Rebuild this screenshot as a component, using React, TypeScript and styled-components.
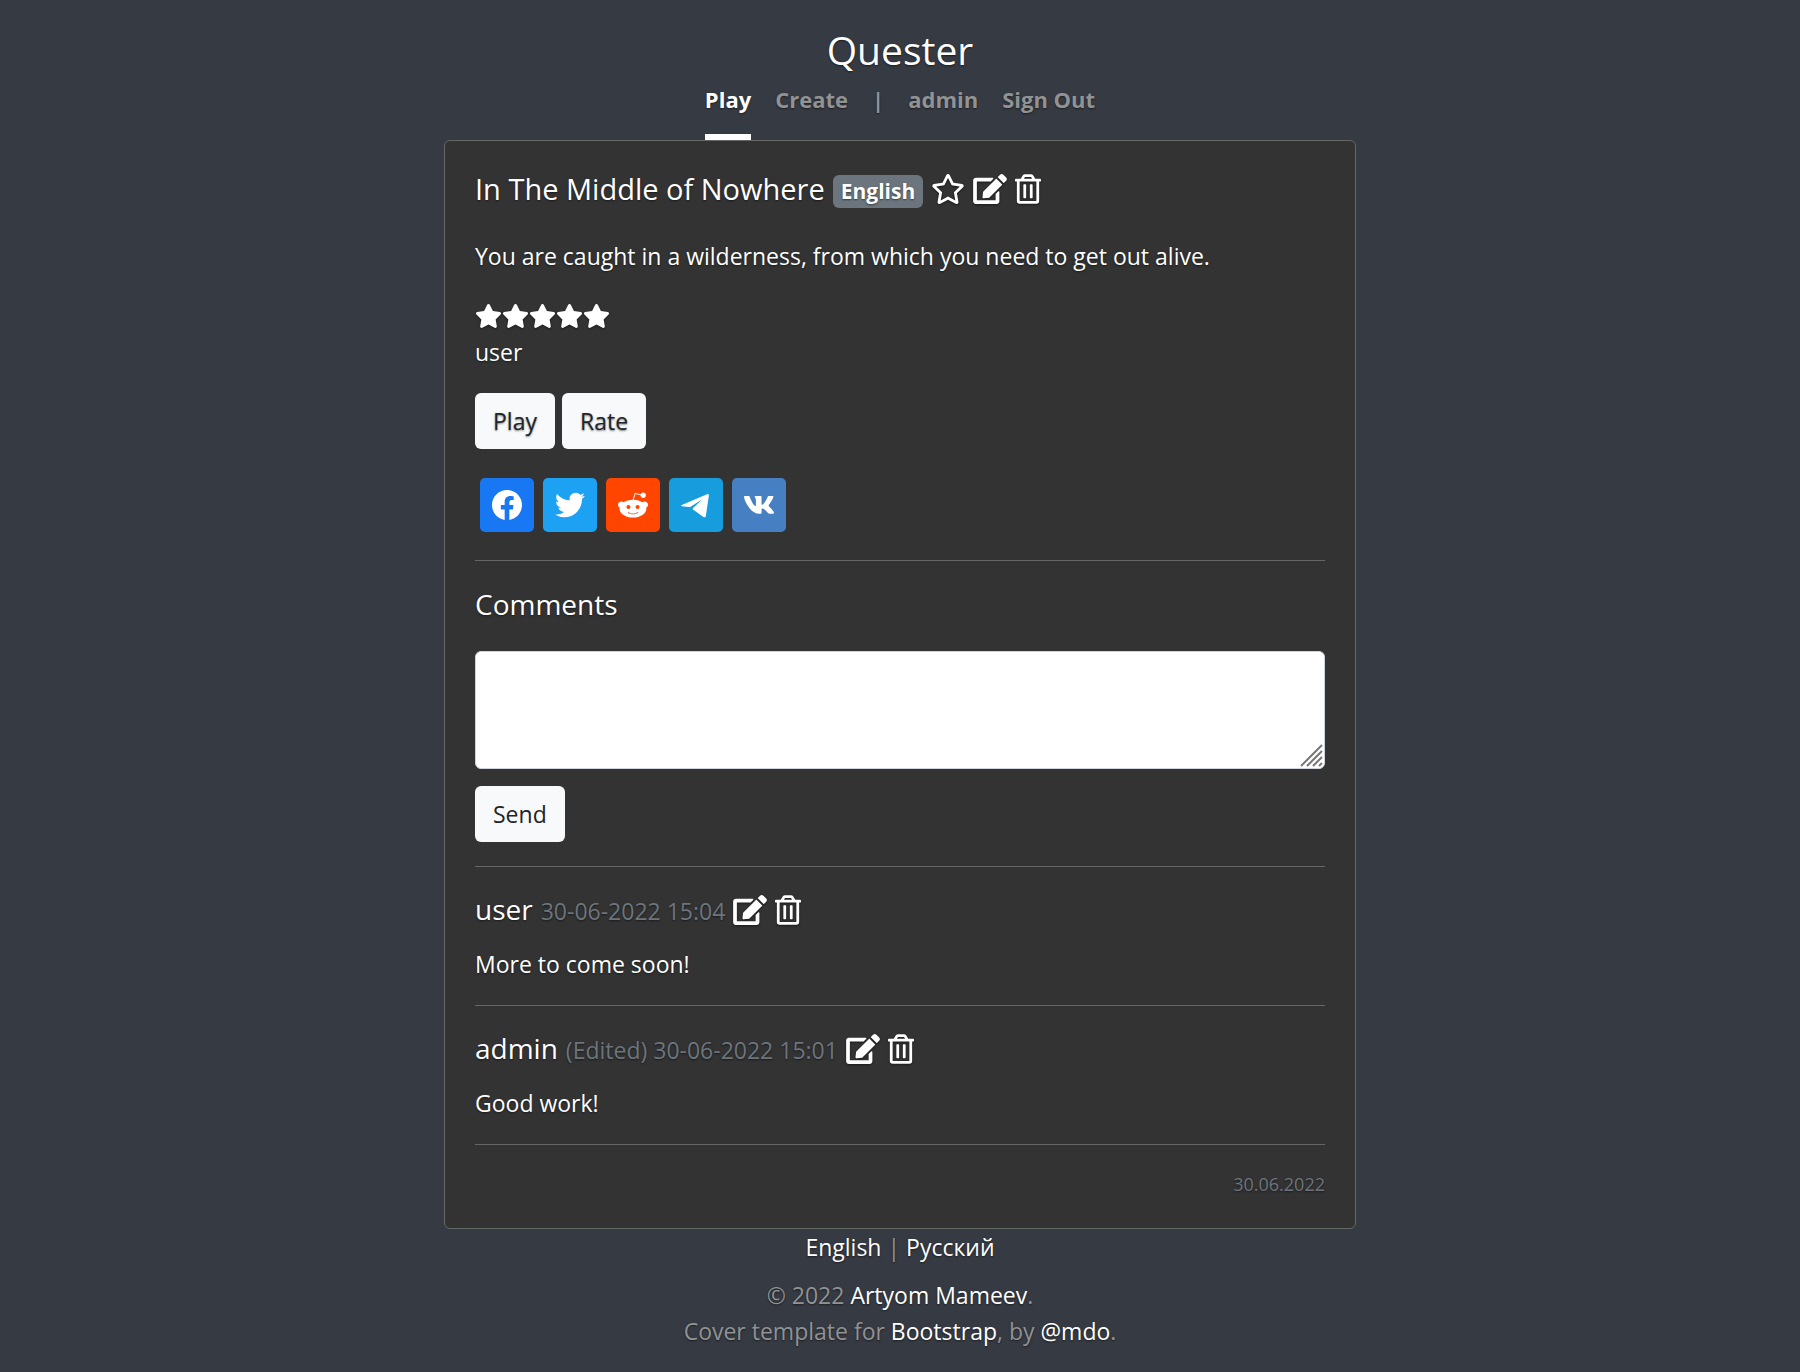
import React from "react";
import styled, { createGlobalStyle } from "styled-components";
import { FaStar, FaRegStar, FaEdit, FaRegTrashAlt } from "react-icons/fa";

const GlobalStyle = createGlobalStyle`
  * { box-sizing: border-box; }
  html { background: #363a42; }
  body {
    margin: 0;
    color: #fff;
    font-family: "Segoe UI", "Open Sans", "Noto Sans", sans-serif;
    font-size: 23px;
    line-height: 36px;
    text-shadow: 0 1px 2px rgba(0, 0, 0, 0.5);
  }
  h1, h2, h3, p { margin: 0; font-weight: 400; }
  button, textarea { font: inherit; }
`;

const Page = styled.div`
  max-width: 960px;
  margin: 0 auto;
  padding: 24px;
`;

const Header = styled.header`
  display: flex;
  flex-direction: column;
  align-items: center;
`;

const Brand = styled.h1`
  font-size: 39px;
  line-height: 52px;
`;

const Nav = styled.nav`
  display: flex;
  gap: 24px;
  font-size: 22px;
  font-weight: 700;
`;

const NavLink = styled.a<{ $active?: boolean }>`
  padding: 5px 0 17px;
  border-bottom: 6px solid ${(p) => (p.$active ? "#fff" : "transparent")};
  color: ${(p) => (p.$active ? "#fff" : "#919293")};
  text-decoration: none;
`;

const NavDivider = styled.span`
  padding: 5px 0 0;
  color: #919293;
`;

const Card = styled.main`
  border: 1px solid #666864;
  border-radius: 6px;
  background: #333;
  padding: 30px;
`;

const TitleRow = styled.div`
  display: flex;
  align-items: center;
  gap: 8px;
  height: 36px;
`;

const Byline = styled.div`
  display: flex;
  align-items: baseline;
  gap: 8px;
`;

const Title = styled.h2<{ $large?: boolean }>`
  display: block;
  font-size: ${(p) => (p.$large ? 29 : 28)}px;
  line-height: 36px;
`;

const Badge = styled.span`
  padding: 0 8px;
  margin-top: 4px;
  border-radius: 6px;
  background: #6c757d;
  font-size: 21px;
  font-weight: 700;
  line-height: 33px;
`;

const IconButton = styled.button<{ $width: number }>`
  display: flex;
  padding: 0;
  border: 0;
  background: none;
  color: #fff;
  cursor: pointer;

  svg {
    width: ${(p) => p.$width}px;
    height: 30px;
    filter: drop-shadow(0 1px 1px rgba(0, 0, 0, 0.5));
  }
`;

const Description = styled.p`
  margin: 31px 0 24px;
`;

const Stars = styled.div`
  display: flex;
  height: 36px;
  padding-top: 6px;

  svg {
    width: 27px;
    height: 24px;
    filter: drop-shadow(0 1px 1px rgba(0, 0, 0, 0.5));
  }
`;

const ButtonRow = styled.div`
  display: flex;
  gap: 7px;
  margin: 23px 0 29px;
`;

const Button = styled.button<{ $flat?: boolean }>`
  height: 56px;
  padding: 0 18px;
  border: 0;
  border-radius: 6px;
  background: #f8f9fa;
  color: #212529;
  text-shadow: ${(p) => (p.$flat ? "none" : "0 1px 2px rgba(0, 0, 0, 0.5)")};
  cursor: pointer;
`;

const ShareRow = styled.div`
  display: flex;
  gap: 9px;
  padding: 0 5px;
`;

const ShareLink = styled.a<{ $color: string }>`
  display: flex;
  align-items: center;
  justify-content: center;
  width: 54px;
  height: 54px;
  border-radius: 5px;
  background: ${(p) => p.$color};
  color: #fff;
`;

const Rule = styled.hr<{ $gap: number }>`
  height: 1px;
  margin: ${(p) => p.$gap}px 0 25px;
  border: 0;
  background: #666;
`;

const CommentField = styled.div`
  position: relative;
  margin: 29px 0 17px;
`;

const CommentBox = styled.textarea`
  display: block;
  width: 100%;
  height: 118px;
  padding: 9px 18px;
  border: 1px solid #ced4da;
  border-radius: 6px;
  background: #fff;
  resize: vertical;

  &::-webkit-resizer { background: transparent; }
`;

const Grip = styled.svg`
  position: absolute;
  right: 2px;
  bottom: 2px;
  pointer-events: none;
`;

const Stamp = styled.span`
  color: #6c757d;
`;

const CommentText = styled.p`
  margin-top: 18px;
`;

const CardDate = styled.p`
  color: #6c757d;
  font-size: 18px;
  line-height: 28px;
  text-align: right;
`;

const Footer = styled.footer`
  color: #919293;
  text-align: center;

  a { color: #fff; text-decoration: none; }
`;

const Languages = styled.p`
  && { margin-bottom: 12px; }
`;

const shares = [
  {
    name: "Facebook",
    color: "#1877f2",
    box: "0 0 24 24",
    d: "M24 12.073c0-6.627-5.373-12-12-12s-12 5.373-12 12c0 5.99 4.388 10.954 10.125 11.854v-8.385H7.078v-3.47h3.047V9.43c0-3.007 1.792-4.669 4.533-4.669 1.312 0 2.686.235 2.686.235v2.953H15.83c-1.491 0-1.956.925-1.956 1.874v2.25h3.328l-.532 3.47h-2.796v8.385C19.612 23.027 24 18.062 24 12.073z",
  },
  {
    name: "Twitter",
    color: "#1da1f2",
    box: "0 0 24 24",
    d: "M23.953 4.57a10 10 0 01-2.825.775 4.958 4.958 0 002.163-2.723c-.951.555-2.005.959-3.127 1.184a4.92 4.92 0 00-8.384 4.482C7.69 8.095 4.067 6.13 1.64 3.162a4.822 4.822 0 00-.666 2.475c0 1.71.87 3.213 2.188 4.096a4.904 4.904 0 01-2.228-.616v.06a4.923 4.923 0 003.946 4.827 4.996 4.996 0 01-2.212.085 4.936 4.936 0 004.604 3.417 9.867 9.867 0 01-6.102 2.105c-.39 0-.779-.023-1.17-.067a13.995 13.995 0 007.557 2.209c9.053 0 13.998-7.496 13.998-13.985 0-.21 0-.42-.015-.63A9.935 9.935 0 0024 4.59z",
  },
  {
    name: "Reddit",
    color: "#ff4500",
    box: "0 0 24 24",
    d: "M24 11.779c0-1.459-1.192-2.645-2.657-2.645-.715 0-1.363.286-1.84.746-1.81-1.191-4.259-1.949-6.971-2.046l1.483-4.669 4.016.941-.006.058c0 1.193.975 2.163 2.174 2.163 1.198 0 2.172-.97 2.172-2.163s-.975-2.164-2.172-2.164c-.92 0-1.704.574-2.021 1.379l-4.329-1.015c-.189-.046-.381.063-.44.249l-1.654 5.207c-2.838.034-5.409.798-7.3 2.025-.474-.438-1.103-.712-1.799-.712-1.465 0-2.656 1.187-2.656 2.646 0 .97.533 1.811 1.317 2.271-.052.282-.086.567-.086.857 0 3.911 4.808 7.093 10.719 7.093s10.72-3.182 10.72-7.093c0-.274-.029-.544-.075-.81.832-.447 1.405-1.312 1.405-2.318zm-17.224 1.816c0-.868.71-1.575 1.582-1.575.872 0 1.581.707 1.581 1.575s-.709 1.574-1.581 1.574-1.582-.706-1.582-1.574zm9.061 4.669c-.797.793-2.048 1.179-3.824 1.179l-.013-.003-.013.003c-1.777 0-3.028-.386-3.824-1.179-.145-.144-.145-.379 0-.523.145-.145.381-.145.526 0 .65.647 1.729.961 3.298.961l.013.003.013-.003c1.569 0 2.648-.315 3.298-.962.145-.145.381-.144.526 0 .145.145.145.379 0 .524zm-.189-3.095c-.872 0-1.581-.706-1.581-1.574 0-.868.709-1.575 1.581-1.575s1.581.707 1.581 1.575-.709 1.574-1.581 1.574z",
  },
  {
    name: "Telegram",
    color: "#179cde",
    box: "0 0 24 24",
    d: "M.6 11.9 20.8 3.4c.9-.35 1.6.2 1.5 1.2L19.9 20.6c-.2 1.3-1 1.6-2 .9L9.6 15.6c-.4-.3-.4-.8 0-1.2L17.2 7.3 7.6 13.4c-.5.3-1 .4-1.6.2L.6 13c-.8-.3-.8-.8 0-1.1z",
  },
  {
    name: "VK",
    color: "#4680c2",
    box: "4 4.4 16 16",
    d: "M19.376 17.123h-1.744c-.66 0-.864-.525-2.05-1.727-1.033-1-1.49-1.135-1.744-1.135-.356 0-.458.102-.458.593v1.575c0 .424-.135.678-1.253.678-1.846 0-3.896-1.118-5.335-3.202C4.624 10.857 4.03 8.57 4.03 8.096c0-.254.102-.491.593-.491h1.744c.44 0 .61.203.78.677.863 2.49 2.303 4.675 2.896 4.675.22 0 .322-.102.322-.66V9.721c-.068-1.186-.695-1.287-.695-1.71 0-.204.17-.407.44-.407h2.744c.373 0 .508.203.508.643v3.473c0 .372.17.508.271.508.22 0 .407-.136.813-.542 1.254-1.406 2.151-3.574 2.151-3.574.119-.254.322-.491.763-.491h1.744c.525 0 .644.27.525.643-.22 1.017-2.354 4.031-2.354 4.031-.186.305-.254.44 0 .78.186.254.796.779 1.203 1.253.745.847 1.32 1.558 1.473 2.05.17.49-.085.744-.576.744z",
  },
];

const EditButton = () => (
  <IconButton type="button" aria-label="Edit" $width={34}><FaEdit /></IconButton>
);

const DeleteButton = () => (
  <IconButton type="button" aria-label="Delete" $width={26}><FaRegTrashAlt /></IconButton>
);

interface CommentProps {
  author: string;
  stamp: string;
  text: string;
}

const Comment = ({ author, stamp, text }: CommentProps) => (
  <article>
    <TitleRow>
      <Byline>
        <Title>{author}</Title>
        <Stamp>{stamp}</Stamp>
      </Byline>
      <EditButton />
      <DeleteButton />
    </TitleRow>
    <CommentText>{text}</CommentText>
  </article>
);

export default function App() {
  return (
    <>
      <GlobalStyle />
      <Page>
        <Header>
          <Brand>Quester</Brand>
          <Nav>
            <NavLink href="#play" $active>Play</NavLink>
            <NavLink href="#create">Create</NavLink>
            <NavDivider>|</NavDivider>
            <NavLink href="#admin">admin</NavLink>
            <NavLink href="#sign-out">Sign Out</NavLink>
          </Nav>
        </Header>
        <Card>
          <TitleRow>
            <Title $large>In The Middle of Nowhere</Title>
            <Badge>English</Badge>
            <IconButton type="button" aria-label="Favourite" $width={34}><FaRegStar /></IconButton>
            <EditButton />
            <DeleteButton />
          </TitleRow>
          <Description>
            You are caught in a wilderness, from which you need to get out alive.
          </Description>
          <Stars role="img" aria-label="5 of 5">
            {[1, 2, 3, 4, 5].map((n) => <FaStar key={n} />)}
          </Stars>
          <p>user</p>
          <ButtonRow>
            <Button type="button">Play</Button>
            <Button type="button">Rate</Button>
          </ButtonRow>
          <ShareRow>
            {shares.map((s) => (
              <ShareLink key={s.name} href={"#" + s.name} aria-label={s.name} $color={s.color}>
                <svg width="30" height="30" viewBox={s.box} fill="currentColor">
                  <path d={s.d} />
                </svg>
              </ShareLink>
            ))}
          </ShareRow>
          <Rule $gap={28} />
          <Title as="label" htmlFor="comment">Comments</Title>
          <CommentField>
            <CommentBox id="comment" />
            <Grip width="23" height="23" viewBox="0 0 23 23" stroke="#777" strokeWidth="2">
              <path d="M1 22 22 1M7 22 22 7M13 22 22 13M19 22 22 19" />
            </Grip>
          </CommentField>
          <Button type="button" $flat>Send</Button>
          <Rule $gap={24} />
          <Comment author="user" stamp="30-06-2022 15:04" text="More to come soon!" />
          <Rule $gap={23} />
          <Comment author="admin" stamp="(Edited) 30-06-2022 15:01" text="Good work!" />
          <Rule $gap={23} />
          <CardDate>30.06.2022</CardDate>
        </Card>
        <Footer>
          <Languages>
            <a href="#en">English</a> | <a href="#ru">Русский</a>
          </Languages>
          <p>© 2022 <a href="#author">Artyom Mameev</a>.</p>
          <p>
            Cover template for <a href="#bootstrap">Bootstrap</a>, by <a href="#mdo">@mdo</a>.
          </p>
        </Footer>
      </Page>
    </>
  );
}
